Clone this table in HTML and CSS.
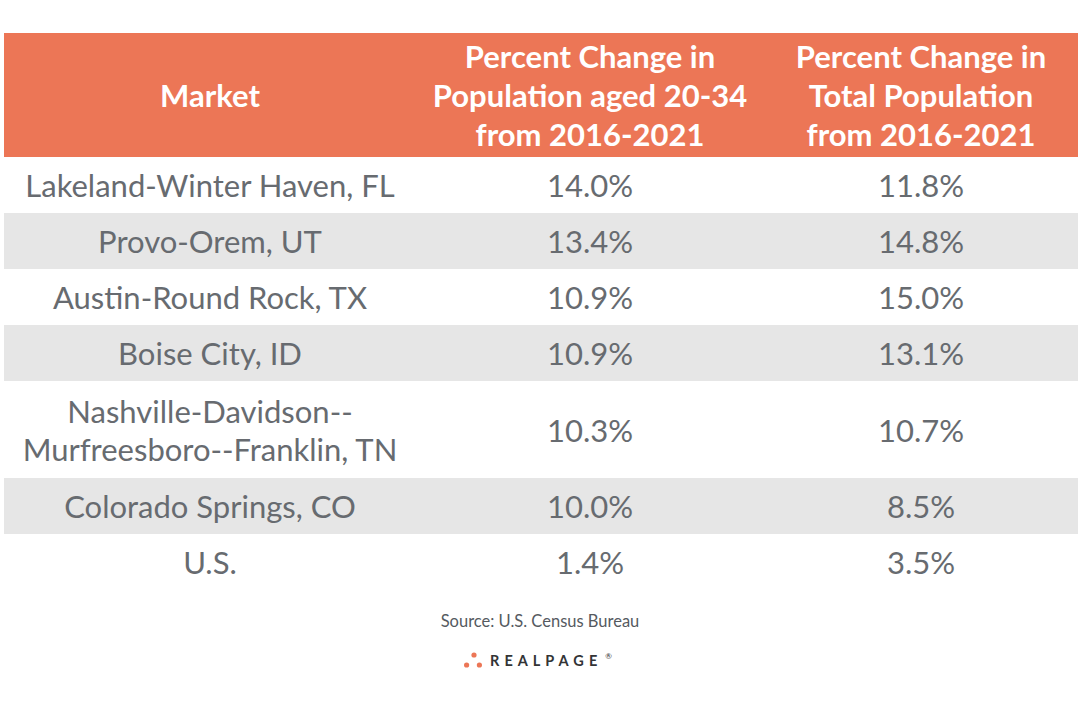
FILE: index.html
```html
<!DOCTYPE html>
<html>
<head>
<meta charset="utf-8">
<link rel="stylesheet" href="styles.css">
</head>
<body>
<div class="page">
  <table class="data">
    <colgroup>
      <col class="c1"><col class="c2"><col class="c3">
    </colgroup>
    <thead>
      <tr>
        <th>Market</th>
        <th>Percent Change in<br>Population aged 20-34<br>from 2016-2021</th>
        <th>Percent Change in<br>Total Population<br>from 2016-2021</th>
      </tr>
    </thead>
    <tbody>
      <tr><td>Lakeland-Winter Haven, FL</td><td>14.0%</td><td>11.8%</td></tr>
      <tr class="alt"><td>Provo-Orem, UT</td><td>13.4%</td><td>14.8%</td></tr>
      <tr><td>Austin-Round Rock, TX</td><td>10.9%</td><td>15.0%</td></tr>
      <tr class="alt"><td>Boise City, ID</td><td>10.9%</td><td>13.1%</td></tr>
      <tr class="tall"><td>Nashville-Davidson--<br>Murfreesboro--Franklin, TN</td><td>10.3%</td><td>10.7%</td></tr>
      <tr class="alt"><td>Colorado Springs, CO</td><td>10.0%</td><td>8.5%</td></tr>
      <tr><td>U.S.</td><td>1.4%</td><td>3.5%</td></tr>
    </tbody>
  </table>
  <p class="source">Source: U.S. Census Bureau</p>
  <div class="logo">
    <svg class="dots" width="18" height="16" viewBox="0 0 18 16">
      <circle cx="10" cy="3" r="2.6" fill="#ec7656"/>
      <circle cx="2.6" cy="13" r="2.6" fill="#ec7656"/>
      <circle cx="15.4" cy="13" r="2.6" fill="#ec7656"/>
    </svg>
    <span class="brand">REALPAGE</span><span class="reg">®</span>
  </div>
</div>
</body>
</html>
```

FILE: styles.css
```css
html, body {
  margin: 0;
  padding: 0;
  background: #ffffff;
}
.page {
  width: 1080px;
  height: 720px;
  padding-top: 33px;
  box-sizing: border-box;
  font-family: Lato, "Open Sans", sans-serif;
}
.data {
  margin-left: 4px;
  width: 1074px;
  border-collapse: collapse;
  table-layout: fixed;
}
.c1 { width: 412px; }
.c2 { width: 348px; }
.c3 { width: 314px; }
.data th {
  background: #ec7656;
  color: #ffffff;
  font-weight: 700;
  font-size: 31px;
  line-height: 39px;
  height: 124px;
  padding: 0;
  text-align: center;
  vertical-align: middle;
}
.data td {
  color: #676b70;
  font-weight: 400;
  font-size: 31px;
  line-height: 38px;
  height: 56px;
  padding: 0;
  text-align: center;
  vertical-align: middle;
}
.data tr.alt td { background: #e6e6e6; }
.data tr.tall td { height: 97px; }
.source {
  margin: 22px 0 0 0;
  text-align: center;
  font-size: 16.5px;
  color: #555a5f;
  line-height: 18px;
}
.logo {
  margin-top: 22px;
  display: flex;
  justify-content: center;
  align-items: flex-end;
  gap: 8px;
  margin-left: -4px;
}
.dots { display: block; }
.brand {
  font-family: Lato, sans-serif;
  font-weight: 700;
  font-size: 14.5px;
  letter-spacing: 5px;
  color: #333436;
  line-height: 14px;
}
.reg {
  font-size: 8px;
  line-height: 8px;
  color: #333436;
  align-self: flex-start;
  margin-left: -5px;
}
```
